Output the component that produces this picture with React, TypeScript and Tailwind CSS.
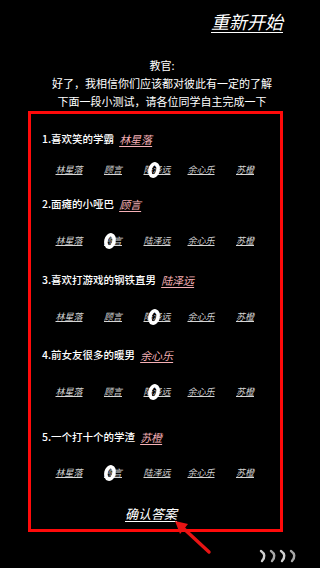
import React from "react";

const NAMES = ["林星落", "顾言", "陆泽远", "余心乐", "苏橙"];

const QUESTIONS = [
  { q: "1.喜欢笑的学霸", a: "林星落", pick: 2, qTop: "mt-[17px]", oTop: "mt-[16px]" },
  { q: "2.面瘫的小哑巴", a: "顾言", pick: 1, qTop: "mt-[19px]", oTop: "mt-[22px]" },
  { q: "3.喜欢打游戏的钢铁直男", a: "陆泽远", pick: 2, qTop: "mt-[24px]", oTop: "mt-[22px]" },
  { q: "4.前女友很多的暖男", a: "余心乐", pick: 2, qTop: "mt-[23px]", oTop: "mt-[22px]" },
  { q: "5.一个打十个的学渣", a: "苏橙", pick: 1, qTop: "mt-[30px]", oTop: "mt-[21px]" },
];

function Ring() {
  return (
    <svg
      width="14"
      height="18"
      viewBox="0 0 14 18"
      className="absolute left-1/2 top-1/2 -translate-x-[10px] -translate-y-[9px]"
    >
      <ellipse
        cx="7"
        cy="9"
        rx="4"
        ry="6.3"
        transform="rotate(14 7 9)"
        fill="none"
        stroke="#fff"
        strokeWidth="3.6"
      />
    </svg>
  );
}

function Arrow() {
  return (
    <svg width="320" height="568" className="absolute left-0 top-0 pointer-events-none">
      <line x1="209" y1="552" x2="182" y2="527" stroke="#e81414" strokeWidth="3.4" strokeLinecap="round" />
      <polygon points="175,521 188,524 180,534" fill="#e81414" />
    </svg>
  );
}

function Scroll() {
  return (
    <svg width="42" height="14" viewBox="0 0 42 14" className="absolute left-[258px] top-[549px]">
      {[0, 1, 2, 3].map((i) => (
        <path
          key={i}
          d={`M${3 + i * 10} 2 Q${9 + i * 10} 6 ${4 + i * 10} 12`}
          fill="none"
          stroke={i % 2 === 0 ? "#cfcfcf" : "#a8a8a8"}
          strokeWidth="2.4"
          strokeLinecap="round"
        />
      ))}
    </svg>
  );
}

export default function App() {
  return (
    <div
      className="relative w-[320px] h-[568px] overflow-hidden bg-black text-white"
      style={{ fontFamily: '"Noto Sans CJK SC", "Noto Sans", sans-serif' }}
    >
      <div className="ml-[28px] w-[255px]">
        <div className="mt-[10px] text-right text-[18px] leading-[22px] italic underline underline-offset-[3px]">
          重新开始
        </div>
      </div>

      <div className="mt-[24px] pl-[4px] text-center text-[11px] leading-[18px]">
        <p>教官:</p>
        <p>好了，我相信你们应该都对彼此有一定的了解</p>
        <p>下面一段小测试，请各位同学自主完成一下</p>
      </div>

      <div className="ml-[28px] mt-[1px] h-[421px] w-[255px] border-[3px] border-[#ff0a0a]">
        {QUESTIONS.map((item) => (
          <div key={item.q}>
            <div className={`${item.qTop} flex h-[16px] items-center gap-[5px] pl-[11px]`}>
              <span className="text-[10.5px] font-medium">{item.q}</span>
              <span className="text-[11px] italic text-[#f6b0b6] underline underline-offset-2">{item.a}</span>
            </div>
            <div className={`${item.oTop} ml-[16px] grid h-[14px] w-[220px] grid-cols-5 items-center`}>
              {NAMES.map((n, i) => (
                <div key={n} className="relative text-center text-[9px] leading-[14px] italic text-[#d6d6d6] underline">
                  {n}
                  {i === item.pick && <Ring />}
                </div>
              ))}
            </div>
          </div>
        ))}

        <div className="mt-[25px] flex justify-center pr-[9px]">
          <span className="text-[13px] leading-[18px] italic underline underline-offset-2">确认答案</span>
        </div>
      </div>

      <Arrow />
      <Scroll />
    </div>
  );
}
